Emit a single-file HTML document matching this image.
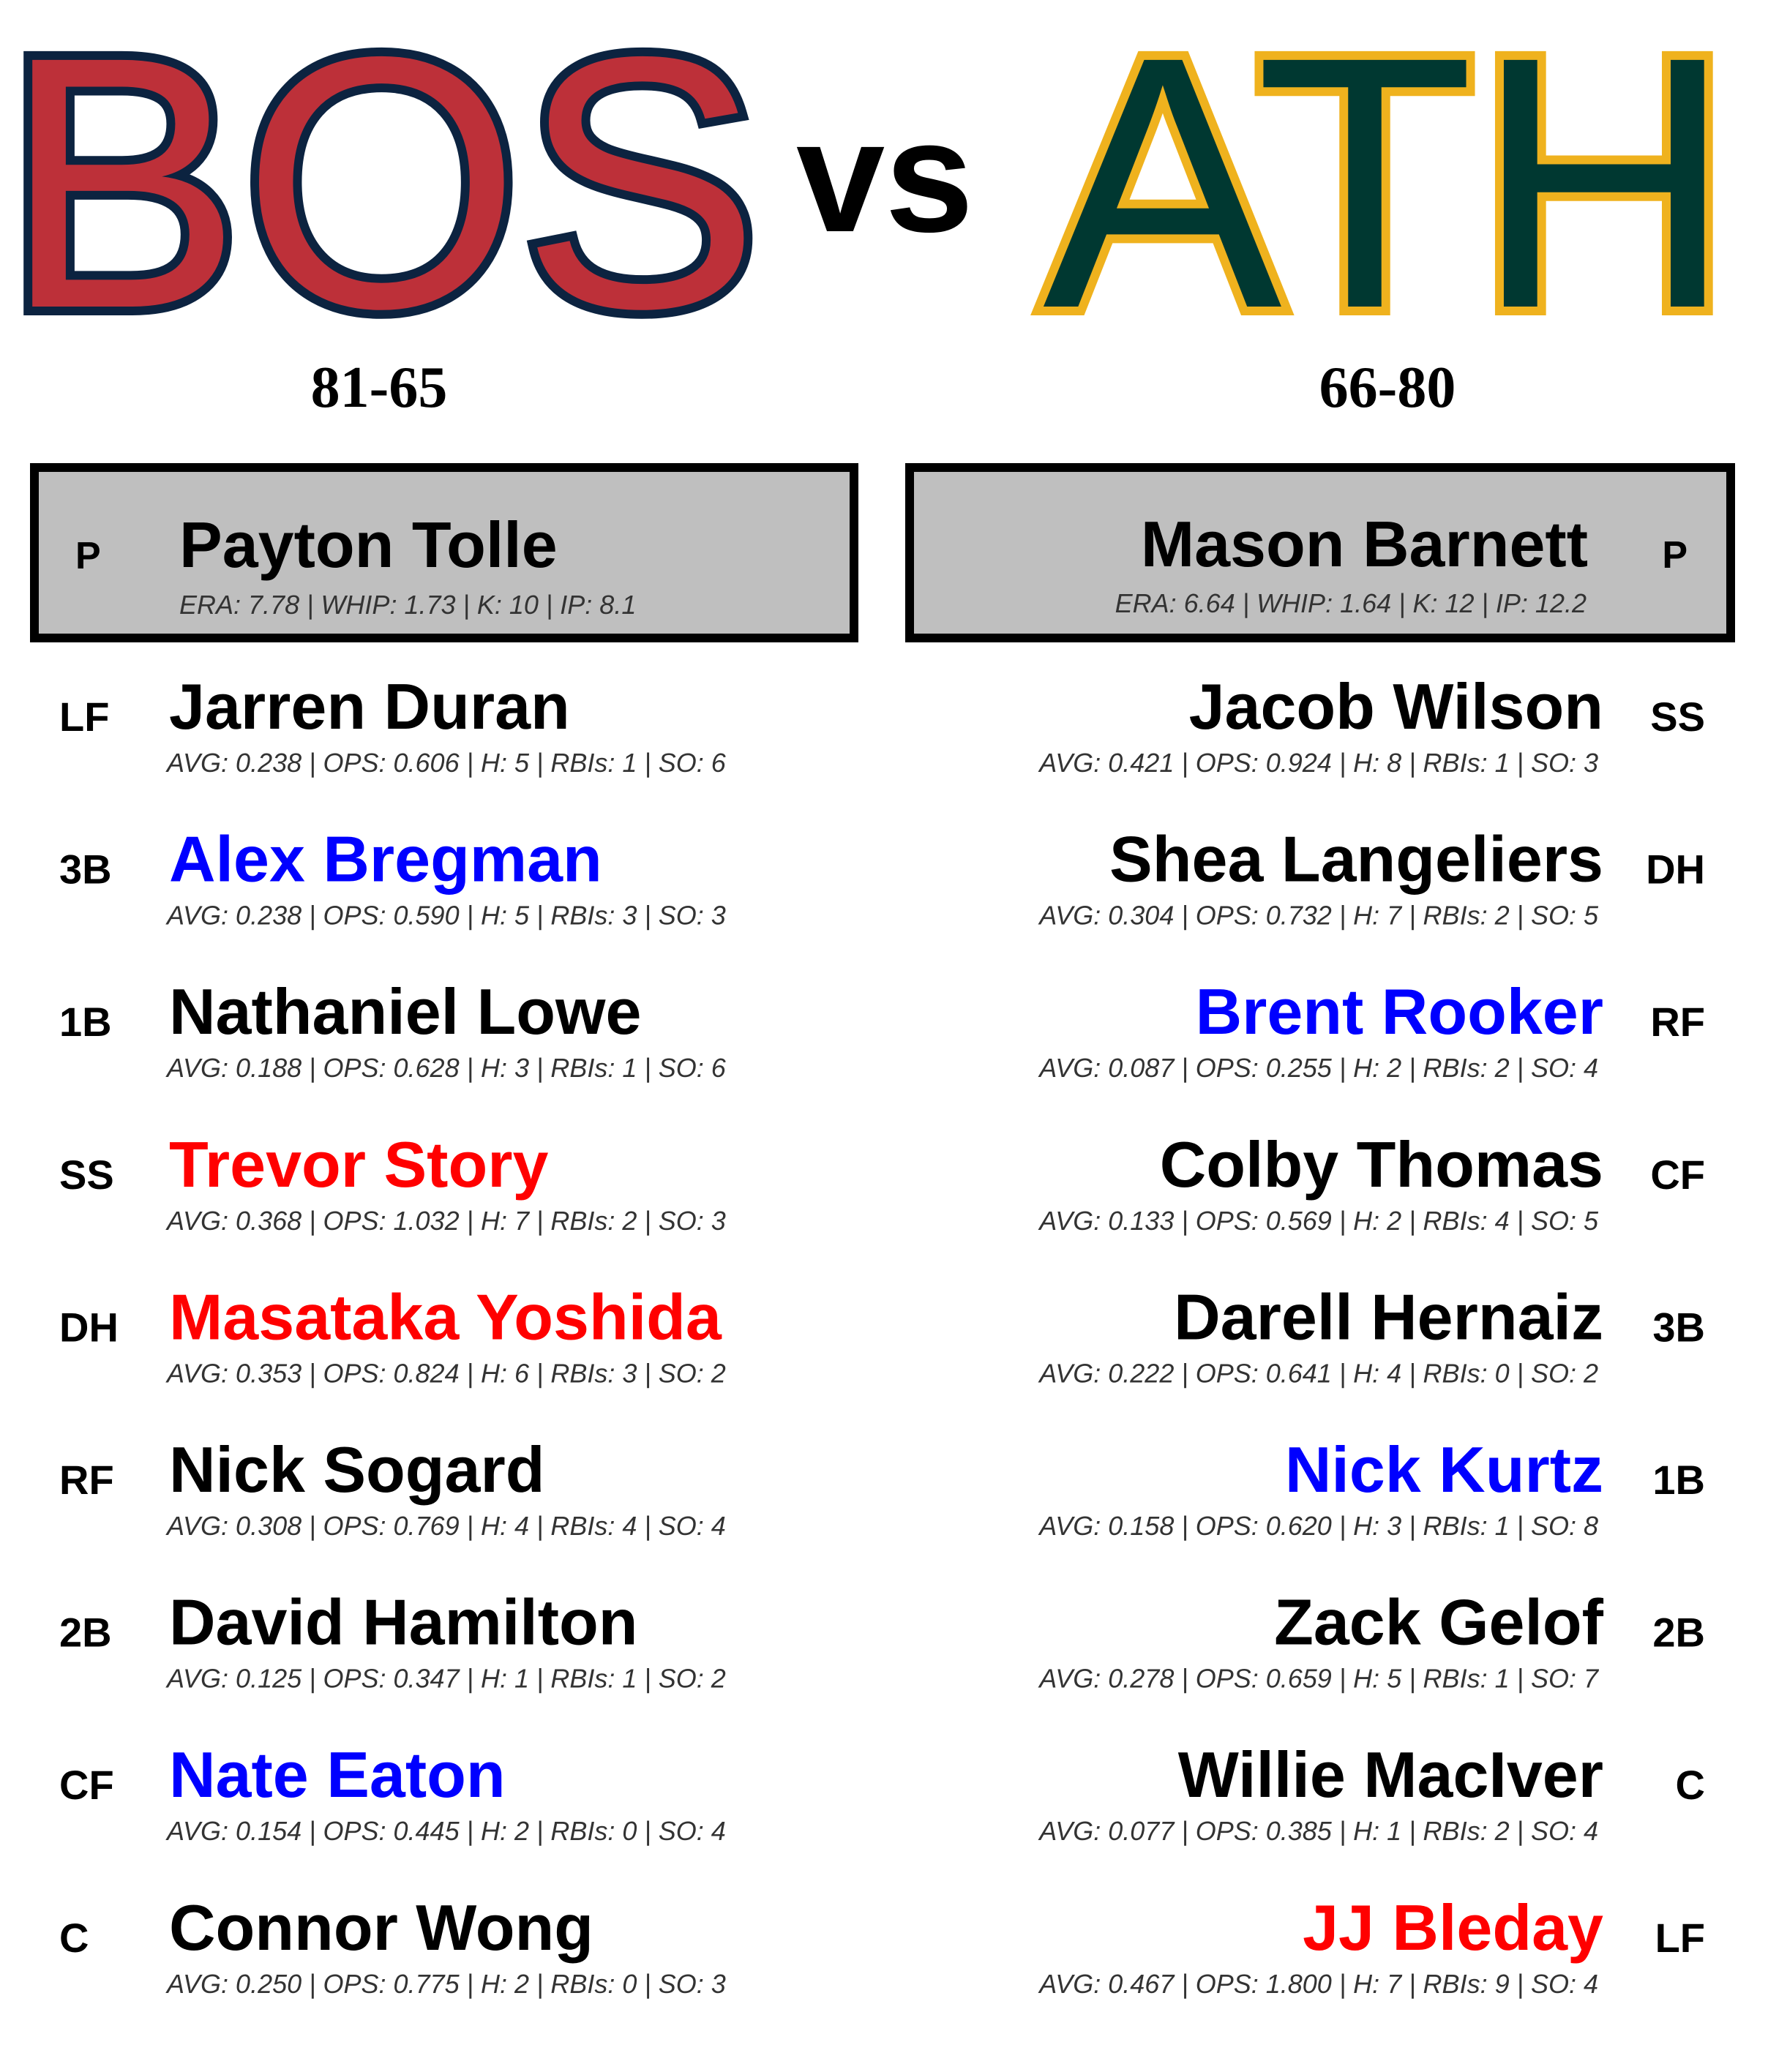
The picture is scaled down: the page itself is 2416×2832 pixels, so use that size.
<!DOCTYPE html>
<html><head><meta charset="utf-8"><style>
html,body{margin:0;padding:0;background:#fff;}
svg{display:block;}
.n{font-family:"Liberation Sans",sans-serif;font-weight:bold;font-size:88px;}
.s{font-family:"Liberation Sans",sans-serif;font-style:italic;font-size:36px;fill:#333;}
.p{font-family:"Liberation Sans",sans-serif;font-weight:bold;font-size:56px;fill:#000;}
.pp{font-family:"Liberation Sans",sans-serif;font-weight:bold;font-size:52px;fill:#000;}
</style></head><body>
<svg width="2416" height="2832" viewBox="0 0 2416 2832" xmlns="http://www.w3.org/2000/svg">
<g font-family="Liberation Sans, sans-serif" font-size="490" paint-order="stroke" stroke-width="24" stroke-linejoin="miter">
<text x="4" y="419" fill="#bd3039" stroke="#0c2340">BOS</text>
<text x="1425" y="419" fill="#003831" stroke="#efb21e">ATH</text>
</g>
<text x="1088" y="316" font-family="Liberation Sans, sans-serif" font-weight="bold" font-size="218">vs</text>
<g font-family="Liberation Serif, serif" font-weight="bold" font-size="80" text-anchor="middle">
<text x="518" y="556">81-65</text>
<text x="1896" y="556">66-80</text>
</g>
<rect x="47" y="639" width="1120" height="233" fill="#bfbfbf" stroke="#000" stroke-width="12"/>
<rect x="1243" y="639" width="1122" height="233" fill="#bfbfbf" stroke="#000" stroke-width="12"/>
<text class="pp" x="103" y="777">P</text>
<text class="n" x="245" y="775">Payton Tolle</text>
<text class="s" x="245" y="839">ERA: 7.78 | WHIP: 1.73 | K: 10 | IP: 8.1</text>
<text class="pp" x="2306" y="776" text-anchor="end">P</text>
<text class="n" x="2170" y="774" text-anchor="end">Mason Barnett</text>
<text class="s" x="2168" y="837" text-anchor="end">ERA: 6.64 | WHIP: 1.64 | K: 12 | IP: 12.2</text>

<g transform="translate(0,0)">
<text class="p" x="81" y="999">LF</text><text class="n" x="231" y="996">Jarren Duran</text><text class="s" x="228" y="1055">AVG: 0.238 | OPS: 0.606 | H: 5 | RBIs: 1 | SO: 6</text>
<text class="p" x="2330" y="999" text-anchor="end">SS</text><text class="n" x="2191" y="996" text-anchor="end">Jacob Wilson</text><text class="s" x="2184" y="1055" text-anchor="end">AVG: 0.421 | OPS: 0.924 | H: 8 | RBIs: 1 | SO: 3</text>
</g>
<g transform="translate(0,208.6)">
<text class="p" x="81" y="999">3B</text><text class="n" x="231" y="996" fill="#0000ff">Alex Bregman</text><text class="s" x="228" y="1055">AVG: 0.238 | OPS: 0.590 | H: 5 | RBIs: 3 | SO: 3</text>
<text class="p" x="2330" y="999" text-anchor="end">DH</text><text class="n" x="2191" y="996" text-anchor="end">Shea Langeliers</text><text class="s" x="2184" y="1055" text-anchor="end">AVG: 0.304 | OPS: 0.732 | H: 7 | RBIs: 2 | SO: 5</text>
</g>
<g transform="translate(0,417.2)">
<text class="p" x="81" y="999">1B</text><text class="n" x="231" y="996">Nathaniel Lowe</text><text class="s" x="228" y="1055">AVG: 0.188 | OPS: 0.628 | H: 3 | RBIs: 1 | SO: 6</text>
<text class="p" x="2330" y="999" text-anchor="end">RF</text><text class="n" x="2191" y="996" text-anchor="end" fill="#0000ff">Brent Rooker</text><text class="s" x="2184" y="1055" text-anchor="end">AVG: 0.087 | OPS: 0.255 | H: 2 | RBIs: 2 | SO: 4</text>
</g>
<g transform="translate(0,625.8)">
<text class="p" x="81" y="999">SS</text><text class="n" x="231" y="996" fill="#ff0000">Trevor Story</text><text class="s" x="228" y="1055">AVG: 0.368 | OPS: 1.032 | H: 7 | RBIs: 2 | SO: 3</text>
<text class="p" x="2330" y="999" text-anchor="end">CF</text><text class="n" x="2191" y="996" text-anchor="end">Colby Thomas</text><text class="s" x="2184" y="1055" text-anchor="end">AVG: 0.133 | OPS: 0.569 | H: 2 | RBIs: 4 | SO: 5</text>
</g>
<g transform="translate(0,834.4)">
<text class="p" x="81" y="999">DH</text><text class="n" x="231" y="996" fill="#ff0000">Masataka Yoshida</text><text class="s" x="228" y="1055">AVG: 0.353 | OPS: 0.824 | H: 6 | RBIs: 3 | SO: 2</text>
<text class="p" x="2330" y="999" text-anchor="end">3B</text><text class="n" x="2191" y="996" text-anchor="end">Darell Hernaiz</text><text class="s" x="2184" y="1055" text-anchor="end">AVG: 0.222 | OPS: 0.641 | H: 4 | RBIs: 0 | SO: 2</text>
</g>
<g transform="translate(0,1043)">
<text class="p" x="81" y="999">RF</text><text class="n" x="231" y="996">Nick Sogard</text><text class="s" x="228" y="1055">AVG: 0.308 | OPS: 0.769 | H: 4 | RBIs: 4 | SO: 4</text>
<text class="p" x="2330" y="999" text-anchor="end">1B</text><text class="n" x="2191" y="996" text-anchor="end" fill="#0000ff">Nick Kurtz</text><text class="s" x="2184" y="1055" text-anchor="end">AVG: 0.158 | OPS: 0.620 | H: 3 | RBIs: 1 | SO: 8</text>
</g>
<g transform="translate(0,1251.6)">
<text class="p" x="81" y="999">2B</text><text class="n" x="231" y="996">David Hamilton</text><text class="s" x="228" y="1055">AVG: 0.125 | OPS: 0.347 | H: 1 | RBIs: 1 | SO: 2</text>
<text class="p" x="2330" y="999" text-anchor="end">2B</text><text class="n" x="2191" y="996" text-anchor="end">Zack Gelof</text><text class="s" x="2184" y="1055" text-anchor="end">AVG: 0.278 | OPS: 0.659 | H: 5 | RBIs: 1 | SO: 7</text>
</g>
<g transform="translate(0,1460.2)">
<text class="p" x="81" y="999">CF</text><text class="n" x="231" y="996" fill="#0000ff">Nate Eaton</text><text class="s" x="228" y="1055">AVG: 0.154 | OPS: 0.445 | H: 2 | RBIs: 0 | SO: 4</text>
<text class="p" x="2330" y="999" text-anchor="end">C</text><text class="n" x="2191" y="996" text-anchor="end">Willie MacIver</text><text class="s" x="2184" y="1055" text-anchor="end">AVG: 0.077 | OPS: 0.385 | H: 1 | RBIs: 2 | SO: 4</text>
</g>
<g transform="translate(0,1668.8)">
<text class="p" x="81" y="999">C</text><text class="n" x="231" y="996">Connor Wong</text><text class="s" x="228" y="1055">AVG: 0.250 | OPS: 0.775 | H: 2 | RBIs: 0 | SO: 3</text>
<text class="p" x="2330" y="999" text-anchor="end">LF</text><text class="n" x="2191" y="996" text-anchor="end" fill="#ff0000">JJ Bleday</text><text class="s" x="2184" y="1055" text-anchor="end">AVG: 0.467 | OPS: 1.800 | H: 7 | RBIs: 9 | SO: 4</text>
</g>
</svg>
</body></html>
